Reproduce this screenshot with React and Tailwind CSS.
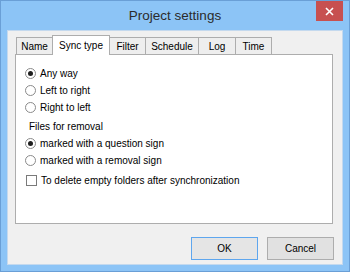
import React from "react";

const font = { fontFamily: '"Liberation Sans", Arial, sans-serif' };

function Radio({ checked, label }) {
  return (
    <div className="flex h-[17px] items-center gap-[4px] pl-[9px]">
      <div className="flex h-[11px] w-[11px] items-center justify-center rounded-full border border-[#8a8a8a] bg-white">
        {checked && <div className="h-[5px] w-[5px] rounded-full bg-[#1e1e1e]" />}
      </div>
      <span className="text-[10px] leading-none text-black">{label}</span>
    </div>
  );
}

function Tab({ label, selected, w, first }) {
  if (selected) {
    return (
      <div
        className={`relative z-10 -mb-px -ml-px flex h-[20px] items-center justify-center border border-b-0 border-[#adadad] bg-white text-[10px] text-black ${w}`}
      >
        {label}
      </div>
    );
  }
  return (
    <div
      className={`flex h-[17px] items-center justify-center border border-b-0 border-[#adadad] bg-[#eeeeee] text-[10px] text-black ${w} ${first ? "ml-px" : "-ml-px"}`}
    >
      {label}
    </div>
  );
}

export default function App() {
  return (
    <div
      className="flex h-[272px] w-[350px] flex-col border border-[#6a9fd6] bg-[#8cc4f6]"
      style={font}
    >
      <div className="grid h-[29px] grid-cols-[1fr_auto_1fr]">
        <div />
        <div className="self-center pt-[1px] text-[13.5px] text-[#2b2b2b]">Project settings</div>
        <div className="flex justify-end">
          <div className="mr-[6px] flex h-[20px] w-[27px] items-center justify-center bg-[#c75050]">
            <svg width="9" height="9" viewBox="0 0 9 9">
              <path d="M1 1 L8 8 M8 1 L1 8" stroke="white" strokeWidth="1.6" />
            </svg>
          </div>
        </div>
      </div>
      <div className="mx-[6px] mb-[6px] flex flex-1 flex-col border border-[#c4d9ee] bg-[#f0f0f0] pl-[7px] pt-[4px]">
        <div className="flex h-[19px] items-end">
          <Tab label="Name" w="w-[37px]" first />
          <Tab label="Sync type" w="w-[58px]" selected />
          <Tab label="Filter" w="w-[37px]" />
          <Tab label="Schedule" w="w-[54px]" />
          <Tab label="Log" w="w-[38px]" />
          <Tab label="Time" w="w-[37px]" />
        </div>
        <div className="flex h-[170px] w-[318px] flex-col border border-[#adadad] bg-white pt-[10px]">
          <Radio checked label="Any way" />
          <Radio label="Left to right" />
          <Radio label="Right to left" />
          <div className="mt-[2px] flex h-[17px] items-center pl-[13px] text-[10px] text-black">
            Files for removal
          </div>
          <Radio checked label="marked with a question sign" />
          <Radio label="marked with a removal sign" />
          <div className="mt-[3px] flex h-[17px] items-center gap-[4px] pl-[10px]">
            <div className="h-[11px] w-[11px] border border-[#7a7a7a] bg-white" />
            <span className="text-[10px] leading-none text-black">
              To delete empty folders after synchronization
            </span>
          </div>
        </div>
        <div className="mt-[13px] flex justify-end gap-[9px] pr-[8px]">
          <div className="flex h-[23px] w-[67px] items-center justify-center border border-[#5ea6ee] bg-[#e5e5e5] text-[10px] text-black">
            OK
          </div>
          <div className="flex h-[23px] w-[67px] items-center justify-center border border-[#adadad] bg-[#e1e1e1] text-[10px] text-black">
            Cancel
          </div>
        </div>
      </div>
    </div>
  );
}
